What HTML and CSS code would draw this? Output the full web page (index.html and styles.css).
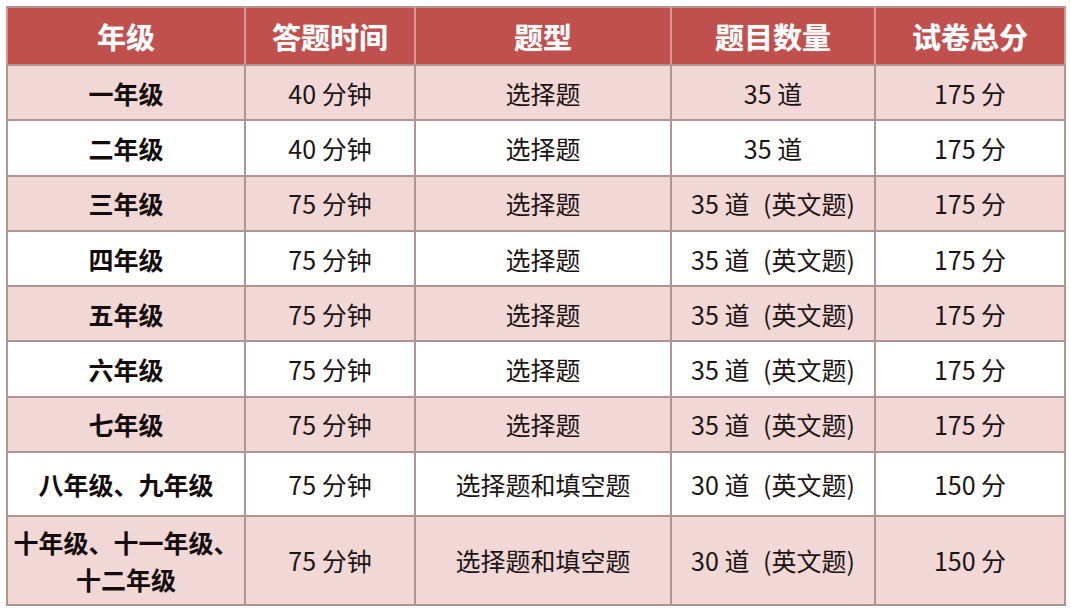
FILE: index.html
```html
<!DOCTYPE html>
<html lang="zh">
<head>
<meta charset="utf-8">
<link rel="stylesheet" href="styles.css">
</head>
<body>
<table class="grid">
  <colgroup>
    <col class="c1"><col class="c2"><col class="c3"><col class="c4"><col class="c5">
  </colgroup>
  <thead>
    <tr class="head"><th>年级</th><th>答题时间</th><th>题型</th><th>题目数量</th><th>试卷总分</th></tr>
  </thead>
  <tbody>
    <tr class="pink"><td class="grade">一年级</td><td>40 分钟</td><td>选择题</td><td>35 道</td><td>175 分</td></tr>
    <tr class="white"><td class="grade">二年级</td><td>40 分钟</td><td>选择题</td><td>35 道</td><td>175 分</td></tr>
    <tr class="pink"><td class="grade">三年级</td><td>75 分钟</td><td>选择题</td><td>35 道 <span class="note">(英文题)</span></td><td>175 分</td></tr>
    <tr class="white"><td class="grade">四年级</td><td>75 分钟</td><td>选择题</td><td>35 道 <span class="note">(英文题)</span></td><td>175 分</td></tr>
    <tr class="pink"><td class="grade">五年级</td><td>75 分钟</td><td>选择题</td><td>35 道 <span class="note">(英文题)</span></td><td>175 分</td></tr>
    <tr class="white"><td class="grade">六年级</td><td>75 分钟</td><td>选择题</td><td>35 道 <span class="note">(英文题)</span></td><td>175 分</td></tr>
    <tr class="pink"><td class="grade">七年级</td><td>75 分钟</td><td>选择题</td><td>35 道 <span class="note">(英文题)</span></td><td>175 分</td></tr>
    <tr class="white tall"><td class="grade">八年级、九年级</td><td>75 分钟</td><td>选择题和填空题</td><td>30 道 <span class="note">(英文题)</span></td><td>150 分</td></tr>
    <tr class="pink taller"><td class="grade">十年级、十一年级、<br>十二年级</td><td>75 分钟</td><td>选择题和填空题</td><td>30 道 <span class="note">(英文题)</span></td><td>150 分</td></tr>
  </tbody>
</table>
</body>
</html>
```
FILE: styles.css
```css
html, body {
  margin: 0;
  padding: 0;
  background: #ffffff;
}
body {
  padding: 6px 0 0 6px;
  font-family: "Noto Sans CJK SC", "Noto Sans", sans-serif;
}
.grid {
  border-collapse: collapse;
  table-layout: fixed;
  width: 1058px;
}
.c1 { width: 238px; }
.c2 { width: 170px; }
.c3 { width: 256px; }
.c4 { width: 204px; }
.c5 { width: 190px; }
.grid th, .grid td {
  border: 2px solid #b39494;
  text-align: center;
  vertical-align: middle;
  padding: 0;
}
.head th {
  background: #c0504d;
  color: #ffffff;
  font-size: 29px;
  font-weight: 700;
  height: 56px;
  border-left-color: #d99594;
  border-right-color: #d99594;
  text-shadow: 0 0 1px rgba(255,255,255,0.6);
}
.grid td {
  font-size: 25px;
  color: #1c1414;
  height: 53.3px;
  line-height: 1.2;
}
.grid td.grade {
  font-weight: 700;
  color: #140c0c;
}
.note { margin-left: 8px; }
.pink td { background: #f1d7d6; }
.white td { background: #ffffff; }
.tall td { height: 62px; }
.taller td { height: 87px; line-height: 37px; }
```
